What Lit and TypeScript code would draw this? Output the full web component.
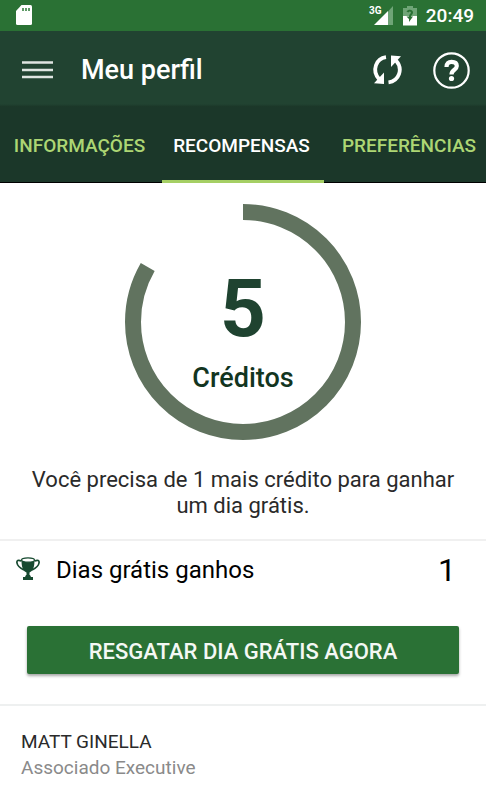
import { LitElement, html, css } from "lit";
import { customElement, property, state } from "lit/decorators.js";
import { classMap } from "lit/directives/class-map.js";

@customElement("status-bar")
class StatusBar extends LitElement {
  static styles = css`
    :host {
      display: flex;
      align-items: center;
      height: 31px;
      padding: 0 12px 0 15px;
      background: #2a7134;
      color: #fff;
    }
    svg {
      display: block;
    }
    .right {
      display: flex;
      align-items: center;
      margin-left: auto;
    }
    .battery {
      margin: 0 9px;
    }
    .net {
      font: 700 10px Roboto, sans-serif;
    }
    .time {
      font: 500 19px/31px Roboto, sans-serif;
    }
  `;

  render() {
    return html`
      <svg width="17" height="21" viewBox="0 0 17 21" aria-hidden="true">
        <path d="M6.500 0H15.500a1.500 1.500 0 0 1 1.500 1.500V18.500a1.500 1.500 0 0 1-1.500 1.500H2.500a1.500 1.500 0 0 1-1.500-1.500V6z" fill="#fff" />
        <path d="M7 3h2v3h-2zM10 3h2v3h-2zM13 3h2v3h-2z" fill="#5f9a67" />
      </svg>
      <div class="right">
        <svg width="26" height="21" viewBox="0 0 26 21" aria-label="3G">
          <text class="net" x="1" y="9" fill="#fff">3G</text>
          <path d="M20 6.500L25 1V20H20z" fill="#6fa577" />
          <path d="M6 20L20 6V20z" fill="#fff" />
        </svg>
        <svg class="battery" width="14" height="21" viewBox="0 0 14 21" aria-hidden="true">
          <path d="M4 1h6v2h4v8H0V3h4z" fill="#6fa577" />
          <path d="M0 11h14v9.500H0z" fill="#fff" />
          <path d="M3.500 6.500C5 4 10 4 10 7.500C10 9.500 8 10 8 11.500H10L6 17V14L3.500 11.500H6C6 9 8 8.500 8 7.500C7.500 6 6 6 5.500 7.500z" fill="#2a7134" />
        </svg>
        <span class="time">20:49</span>
      </div>
    `;
  }
}

@customElement("credit-ring")
class CreditRing extends LitElement {
  @property({ type: Number }) value = 0;
  @property({ type: Number }) total = 6;

  static styles = css`
    :host {
      display: grid;
      width: 236px;
      height: 236px;
    }
    svg,
    .label {
      grid-area: 1 / 1;
    }
    .label {
      display: flex;
      flex-direction: column;
      align-items: center;
      padding-top: 56px;
      color: #1f4330;
      font-family: Roboto, sans-serif;
    }
    .number {
      font-size: 80px;
      line-height: 98px;
      font-weight: 700;
    }
    .unit {
      font-size: 27px;
      line-height: 40px;
      font-weight: 500;
      color: #12351f;
    }
  `;

  render() {
    const share = (this.value / this.total) * 100;
    return html`
      <svg width="236" height="236" viewBox="0 0 236 236" aria-hidden="true">
        <circle
          cx="118"
          cy="118"
          r="110"
          fill="none"
          stroke="#61735f"
          stroke-width="16"
          pathLength="100"
          stroke-dasharray="${share} 100"
          transform="rotate(-90 118 118)"
        />
      </svg>
      <div class="label">
        <span class="number">${this.value}</span>
        <span class="unit">Créditos</span>
      </div>
    `;
  }
}

@customElement("app-root")
class AppRoot extends LitElement {
  @state() private active = 1;

  private tabs = ["INFORMAÇÕES", "RECOMPENSAS", "PREFERÊNCIAS"];

  static styles = css`
    :host {
      display: block;
      min-height: 100vh;
      overflow-x: hidden;
      background: #fff;
      color: #2a2a2a;
      font-family: Roboto, sans-serif;
    }
    h1,
    h2,
    p {
      margin: 0;
    }
    button {
      border: 0;
      padding: 0;
      background: none;
      font-family: inherit;
      cursor: pointer;
    }
    svg {
      display: block;
    }
    .bar {
      display: flex;
      align-items: center;
      box-sizing: border-box;
      height: 76px;
      padding: 2px 16px 0 22px;
      background: linear-gradient(#214331 73px, #1a3527);
      color: #fff;
    }
    .title {
      flex: 1;
      margin-left: 28px;
      font-size: 27px;
      line-height: 32px;
      font-weight: 500;
    }
    .sync {
      margin-right: 30px;
    }
    .tabs {
      display: grid;
      grid-template-columns: repeat(3, 1fr);
      height: 76px;
      background: #1b3729;
      box-shadow: inset 0 -1px #000;
    }
    .tab {
      padding-right: 3px;
      color: #add674;
      font-size: 19px;
      font-weight: 500;
      white-space: nowrap;
    }
    .tab.active {
      box-shadow: inset 0 -3px #a5cf64;
      color: #fff;
    }
    .tab:last-child {
      padding: 0 0 0 8px;
    }
    .credits {
      display: flex;
      flex-direction: column;
      align-items: center;
      padding: 21px 28px 20px;
      border-bottom: 2px solid #f0f0f0;
    }
    .hint {
      margin-top: 27px;
      font-size: 22px;
      line-height: 26px;
      text-align: center;
    }
    .earned {
      display: flex;
      align-items: center;
      height: 58px;
      padding: 0 30px 0 16px;
      color: #000;
    }
    .earned h2 {
      flex: 1;
      margin-left: 16px;
      font-size: 24px;
      font-weight: 400;
    }
    .count {
      font-size: 32px;
    }
    .redeem {
      display: block;
      width: calc(100% - 54px);
      height: 48px;
      margin: 27px 27px 30px;
      padding-top: 2px;
      border-radius: 2px;
      background: #2a7135;
      box-shadow: 0 2px 3px rgba(0, 0, 0, 0.35);
      color: #f4f8f4;
      font-size: 22px;
      font-weight: 500;
    }
    .member {
      padding: 23px 21px;
      border-top: 2px solid #eef0f0;
      font-size: 19px;
      line-height: 26px;
    }
    .role {
      color: #8a8a8a;
    }
  `;

  render() {
    return html`
      <status-bar></status-bar>
      <header class="bar">
        <button aria-label="Menu">
          <svg width="31" height="20" viewBox="0 0 31 20">
            <path d="M0 2.500h31M0 10h31M0 17h31" stroke="#dfe5e1" stroke-width="2.600" />
          </svg>
        </button>
        <h1 class="title">Meu perfil</h1>
        <button class="sync" aria-label="Atualizar">
          <svg width="32" height="30" viewBox="0 0 32 30" fill="none" stroke="#fff" stroke-width="3.800">
            <path d="M15 2.200C5 3.500.5 15.500 8 24" />
            <path d="M17.500 27.300C28 26 32.500 14 25 5.500" />
            <path d="M13 17.500V29L3 28.200z" fill="#fff" stroke="none" />
            <path d="M20 12V.5L30 1.300z" fill="#fff" stroke="none" />
          </svg>
        </button>
        <button aria-label="Ajuda">
          <svg width="37" height="37" viewBox="0 0 37 37" fill="none" stroke="#fff">
            <circle cx="18.500" cy="18.500" r="17.200" stroke-width="2.200" />
            <path d="M13.500 15C13.500 11 15.500 9.900 18.500 9.900C22 9.900 23.800 11.500 23.800 14C23.800 18 18.500 17.500 18.500 22.500" stroke-width="4.200" />
            <circle cx="18.500" cy="26.500" r="2.600" fill="#fff" stroke="none" />
          </svg>
        </button>
      </header>
      <nav class="tabs" role="tablist">
        ${this.tabs.map(
          (name, i) => html`<button
            role="tab"
            aria-selected=${i === this.active}
            class=${classMap({ tab: true, active: i === this.active })}
            @click=${() => (this.active = i)}
          >${name}</button>`
        )}
      </nav>
      <main>
        <section class="credits">
          <credit-ring value="5" total="6"></credit-ring>
          <p class="hint">Você precisa de 1 mais crédito para ganhar um dia grátis.</p>
        </section>
        <section class="earned">
          <svg width="24" height="26" viewBox="0 0 24 26" aria-hidden="true" fill="#174a30">
            <path d="M5.500 3C5.500 10 7 14 10.500 15.500V19H13.500V15.500C17 14 18.500 10 18.500 3z" />
            <ellipse cx="12" cy="3" rx="6.500" ry="2.200" fill="#fff" stroke="#174a30" stroke-width="1.200" />
            <path d="M5.500 4C2 2.500.5 3.500 1 6C1.500 9.500 5 11.500 8 13M18.500 4C22 2.500 23.500 3.500 23 6C22.500 9.500 19 11.500 16 13" fill="none" stroke="#174a30" stroke-width="1.700" />
            <path d="M10 18h4l1 2h2V23H7V20h2z" />
          </svg>
          <h2>Dias grátis ganhos</h2>
          <span class="count">1</span>
        </section>
        <button class="redeem">RESGATAR DIA GRÁTIS AGORA</button>
        <section class="member">
          <p>MATT GINELLA</p>
          <p class="role">Associado Executive</p>
        </section>
      </main>
    `;
  }
}
